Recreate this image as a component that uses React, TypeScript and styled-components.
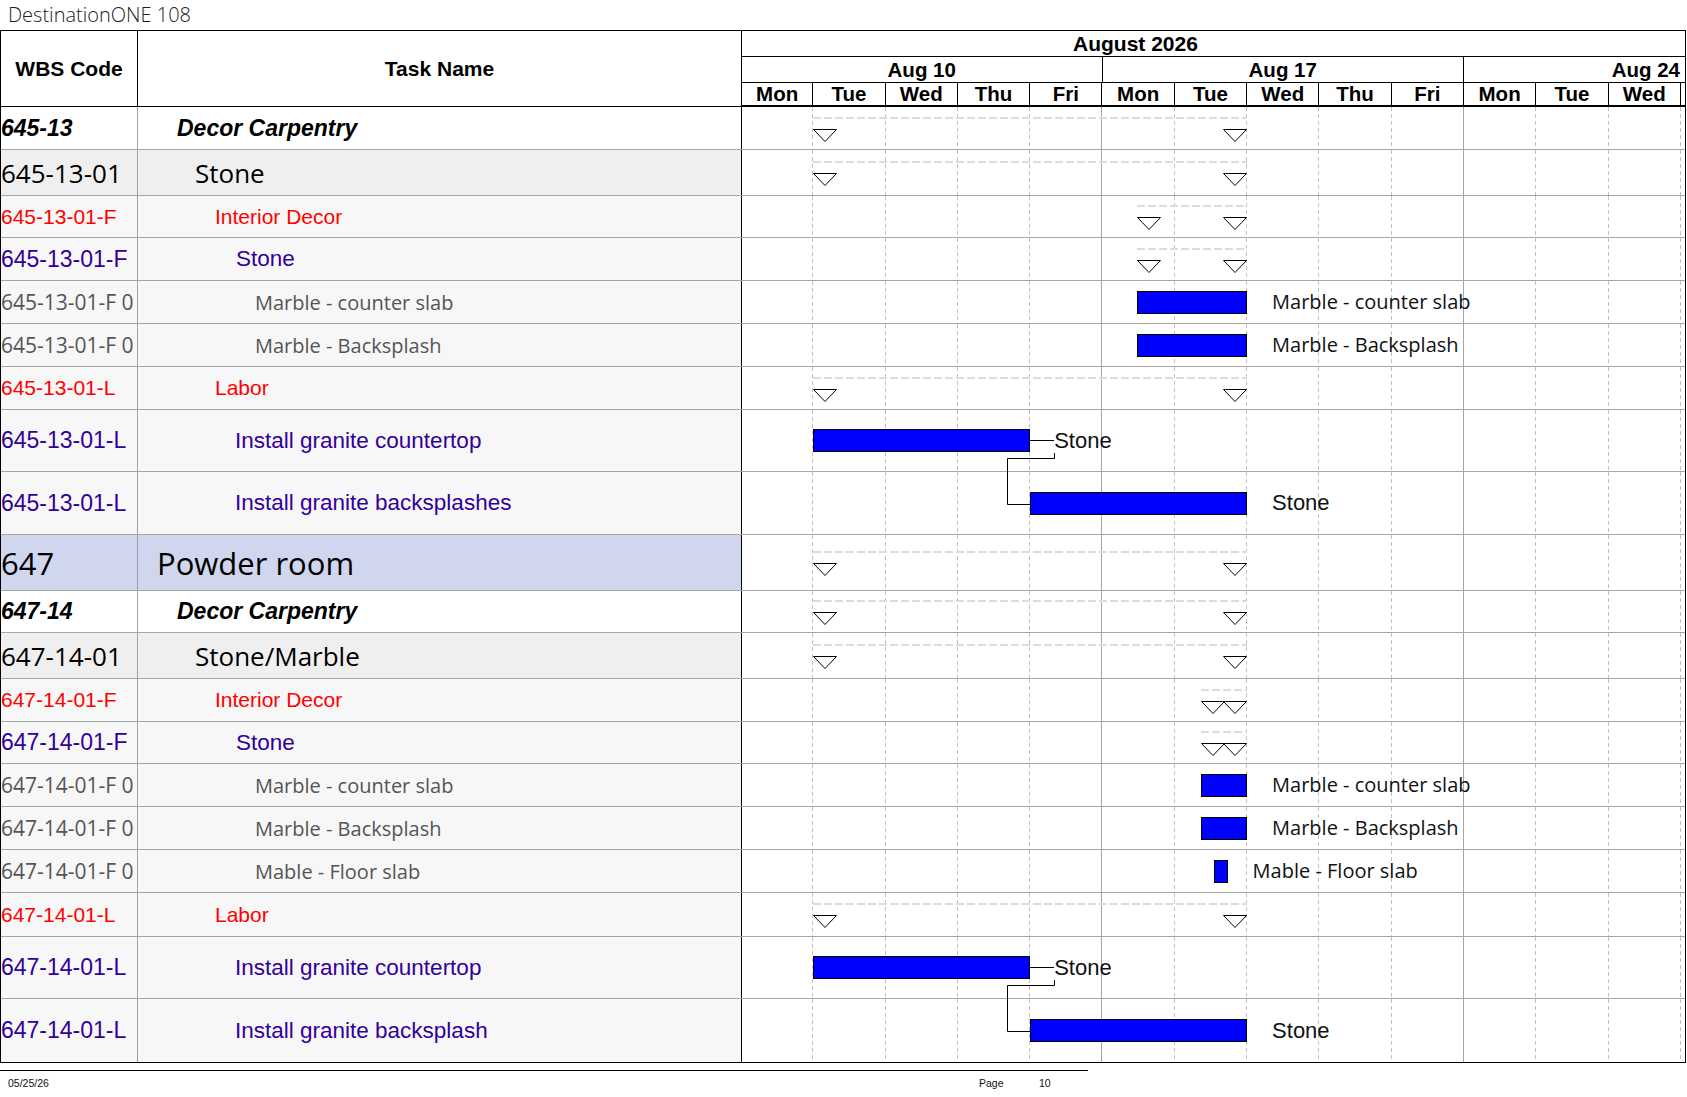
import React from 'react';
import styled, { createGlobalStyle, css } from 'styled-components';

// one working day on the timescale, in px
const DAY = 72.3;
// x of a day offset inside a timeline cell (cell content starts 1px right of the grid origin)
const px = (d: number) => d * DAY - 1;

type Kind = 'area' | 'group' | 'sub' | 'cat' | 'phase' | 'item' | 'task';

type Span = { from: number; to: number };

interface Task {
  code: string;
  name: string;
  kind: Kind;
  h: number;
  summary?: Span;
  bar?: Span & { label: string; link?: boolean };
}

const tasks: Task[] = [
  { code: '645-13', name: 'Decor Carpentry', kind: 'group', h: 43, summary: { from: 1, to: 7 } },
  { code: '645-13-01', name: 'Stone', kind: 'sub', h: 46, summary: { from: 1, to: 7 } },
  { code: '645-13-01-F', name: 'Interior Decor', kind: 'cat', h: 42, summary: { from: 5.48, to: 7 } },
  { code: '645-13-01-F', name: 'Stone', kind: 'phase', h: 43, summary: { from: 5.48, to: 7 } },
  { code: '645-13-01-F 0', name: 'Marble - counter slab', kind: 'item', h: 43, bar: { from: 5.48, to: 7, label: 'Marble - counter slab' } },
  { code: '645-13-01-F 0', name: 'Marble - Backsplash', kind: 'item', h: 43, bar: { from: 5.48, to: 7, label: 'Marble - Backsplash' } },
  { code: '645-13-01-L', name: 'Labor', kind: 'cat', h: 43, summary: { from: 1, to: 7 } },
  { code: '645-13-01-L', name: 'Install granite countertop', kind: 'task', h: 62, bar: { from: 1, to: 4, label: 'Stone', link: true } },
  { code: '645-13-01-L', name: 'Install granite backsplashes', kind: 'task', h: 63, bar: { from: 4, to: 7, label: 'Stone' } },
  { code: '647', name: 'Powder room', kind: 'area', h: 56, summary: { from: 1, to: 7 } },
  { code: '647-14', name: 'Decor Carpentry', kind: 'group', h: 42, summary: { from: 1, to: 7 } },
  { code: '647-14-01', name: 'Stone/Marble', kind: 'sub', h: 46, summary: { from: 1, to: 7 } },
  { code: '647-14-01-F', name: 'Interior Decor', kind: 'cat', h: 43, summary: { from: 6.36, to: 7 } },
  { code: '647-14-01-F', name: 'Stone', kind: 'phase', h: 42, summary: { from: 6.36, to: 7 } },
  { code: '647-14-01-F 0', name: 'Marble - counter slab', kind: 'item', h: 43, bar: { from: 6.36, to: 7, label: 'Marble - counter slab' } },
  { code: '647-14-01-F 0', name: 'Marble - Backsplash', kind: 'item', h: 43, bar: { from: 6.36, to: 7, label: 'Marble - Backsplash' } },
  { code: '647-14-01-F 0', name: 'Mable - Floor slab', kind: 'item', h: 43, bar: { from: 6.54, to: 6.73, label: 'Mable - Floor slab' } },
  { code: '647-14-01-L', name: 'Labor', kind: 'cat', h: 44, summary: { from: 1, to: 7 } },
  { code: '647-14-01-L', name: 'Install granite countertop', kind: 'task', h: 62, bar: { from: 1, to: 4, label: 'Stone', link: true } },
  { code: '647-14-01-L', name: 'Install granite backsplash', kind: 'task', h: 63, bar: { from: 4, to: 7, label: 'Stone' } },
];

const days = ['Mon', 'Tue', 'Wed', 'Thu', 'Fri', 'Mon', 'Tue', 'Wed', 'Thu', 'Fri', 'Mon', 'Tue', 'Wed'];

const RED = '#ff0000';
const INDIGO = '#330099';
const GREY = '#555555';

const arial = '"Liberation Sans", Arial, sans-serif';
const open = '"Open Sans", "Noto Sans", sans-serif';

const looks: Record<Kind, { bg: string; indent: number; code: ReturnType<typeof css>; name: ReturnType<typeof css> }> = {
  area: {
    bg: '#cfd6ee',
    indent: 19,
    code: css`font: 31px ${open}; color: #000;`,
    name: css`font: 31px ${open}; color: #000;`,
  },
  group: {
    bg: '#ffffff',
    indent: 39,
    code: css`font: italic bold 23px ${arial}; color: #000;`,
    name: css`font: italic bold 23px ${arial}; color: #000;`,
  },
  sub: {
    bg: '#efefef',
    indent: 57,
    code: css`font: 26px ${open}; color: #000;`,
    name: css`font: 26px ${open}; color: #000;`,
  },
  cat: {
    bg: '#f7f7f7',
    indent: 77,
    code: css`font: 21px ${arial}; color: ${RED};`,
    name: css`font: 21px ${arial}; color: ${RED};`,
  },
  phase: {
    bg: '#f7f7f7',
    indent: 98,
    code: css`font: 23px ${arial}; color: ${INDIGO};`,
    name: css`font: 22.5px ${arial}; color: ${INDIGO};`,
  },
  item: {
    bg: '#f7f7f7',
    indent: 117,
    code: css`font: 21px ${open}; color: ${GREY};`,
    name: css`font: 20px ${open}; color: ${GREY};`,
  },
  task: {
    bg: '#f7f7f7',
    indent: 97,
    code: css`font: 23px ${arial}; color: ${INDIGO};`,
    name: css`font: 22.5px ${arial}; color: ${INDIGO};`,
  },
};

const GlobalStyle = createGlobalStyle`
  html, body {
    margin: 0;
    padding: 0;
    background: #fff;
  }
  body {
    font-family: ${arial};
    color: #000;
  }
  * {
    box-sizing: border-box;
  }
`;

const Page = styled.div`
  width: 1687px;
  height: 1097px;
  overflow: hidden;
`;

const DocTitle = styled.div`
  height: 30px;
  padding-left: 8px;
  font-family: ${open};
  font-weight: 300;
  font-size: 20px;
  line-height: 29px;
  color: #222;
`;

const Frame = styled.div`
  width: 1686px;
  border: 1px solid #000;
`;

const COLS = '137px 604px 1fr';

const Header = styled.div`
  display: grid;
  grid-template-columns: ${COLS};
  height: 76px;
  border-bottom: 1px solid #000;
`;

const HeadCell = styled.div`
  display: flex;
  align-items: center;
  justify-content: center;
  border-right: 1px solid #000;
  font-weight: bold;
  font-size: 21px;
`;

const Timescale = styled.div`
  display: flex;
  flex-direction: column;
  min-width: 0;
`;

const MonthRow = styled.div`
  height: 26px;
  border-bottom: 1px solid #000;
  padding-left: 331px;
  font-weight: bold;
  font-size: 21px;
  line-height: 25px;
`;

const Tier = styled.div<{ $h: number }>`
  display: flex;
  height: ${p => p.$h}px;
  border-bottom: 1px solid #000;
  overflow: hidden;
`;

const WeekCell = styled.div<{ $w?: number; $right?: boolean }>`
  ${p => (p.$w ? css`width: ${p.$w}px; flex: none; border-right: 1px solid #000;` : css`flex: 1;`)}
  text-align: ${p => (p.$right ? 'right' : 'center')};
  padding-right: ${p => (p.$right ? 5 : 0)}px;
  font-weight: bold;
  font-size: 20.5px;
  line-height: 25px;
  white-space: nowrap;
`;

const DayCell = styled.div<{ $w: number }>`
  width: ${p => p.$w}px;
  flex: none;
  border-right: 1px solid #000;
  text-align: center;
  font-weight: bold;
  font-size: 20.5px;
  line-height: 22px;
`;

const Row = styled.div<{ $h: number; $last: boolean }>`
  display: grid;
  grid-template-columns: ${COLS};
  height: ${p => p.$h}px;
  border-bottom: ${p => (p.$last ? 'none' : '1px solid #a6a6a6')};
`;

const CodeCell = styled.div<{ $kind: Kind }>`
  display: flex;
  align-items: center;
  padding-left: 0;
  overflow: hidden;
  white-space: nowrap;
  border-right: 1px solid #a0a0a0;
  background: ${p => looks[p.$kind].bg};
  ${p => looks[p.$kind].code}
`;

const NameCell = styled.div<{ $kind: Kind }>`
  display: flex;
  align-items: center;
  padding-left: ${p => looks[p.$kind].indent}px;
  overflow: hidden;
  white-space: nowrap;
  border-right: 1px solid #000;
  background: ${p => looks[p.$kind].bg};
  ${p => looks[p.$kind].name}
`;

const TimeCell = styled.div`
  position: relative;
  min-width: 0;
`;

const GridLayer = styled.div`
  position: absolute;
  top: 0;
  bottom: 0;
  left: -1px;
  right: 0;
  display: flex;
  pointer-events: none;
`;

const DayLine = styled.div<{ $week: boolean }>`
  width: ${DAY}px;
  flex: none;
  position: relative;
  &::after {
    content: '';
    position: absolute;
    top: 0;
    bottom: 0;
    right: 0;
    width: 1px;
    background: ${p =>
      p.$week ? '#a6a6a6' : 'repeating-linear-gradient(to bottom, #c2c2c2 0 4px, transparent 4px 7px)'};
  }
`;

const SummaryTrack = styled.div<{ $top: number }>`
  position: absolute;
  top: ${p => p.$top}px;
  height: 2px;
  background: repeating-linear-gradient(to right, #dcdcdc 0 8px, transparent 8px 11px);
`;

const Marker = styled.svg<{ $top: number }>`
  position: absolute;
  top: ${p => p.$top}px;
  width: 24px;
  height: 13px;
  overflow: visible;
`;

const Bar = styled.div`
  position: absolute;
  top: calc(50% - 11.5px);
  height: 23px;
  background: #0000ff;
  border: 1px solid #000;
`;

const BarLabel = styled.div<{ $plain: boolean }>`
  position: absolute;
  top: 50%;
  transform: translateY(-50%);
  white-space: nowrap;
  color: #111;
  font: ${p => (p.$plain ? `20px ${open}` : `22px ${arial}`)};
  line-height: 1;
`;

const Leader = styled.div`
  position: absolute;
  top: calc(50% - 0.5px);
  height: 1px;
  background: #000;
`;

const LinkLine = styled.svg`
  position: absolute;
  left: 0;
  top: 0;
  overflow: visible;
  z-index: 3;
  pointer-events: none;
`;

const FooterRule = styled.div`
  width: 1088px;
  margin-top: 7px;
  border-top: 1px solid #000;
`;

const FooterBar = styled.div`
  display: grid;
  grid-template-columns: 971px 60px auto;
  align-items: center;
  height: 24px;
  padding-left: 8px;
  font: 10.5px ${arial};
  color: #111;
`;

function Triangle({ left, top }: { left: number; top: number }) {
  return (
    <Marker $top={top} style={{ left }} viewBox="0 0 24 13">
      <polygon points="0.5,0.5 23.5,0.5 12,12.5" fill="#fff" stroke="#000" strokeWidth="1" />
    </Marker>
  );
}

function Timeline({ task, nextH }: { task: Task; nextH: number }) {
  const { h, summary, bar } = task;
  const mid = h / 2;
  return (
    <TimeCell>
      <GridLayer>
        {days.map((d, i) => (
          <DayLine key={i} $week={i === 4 || i === 9} />
        ))}
      </GridLayer>
      {summary && (
        <>
          <SummaryTrack
            $top={Math.round(mid - 12)}
            style={{ left: px(summary.from), width: (summary.to - summary.from) * DAY }}
          />
          <Triangle left={px(summary.from)} top={Math.round(mid)} />
          <Triangle left={px(summary.to) - 24} top={Math.round(mid)} />
        </>
      )}
      {bar && (
        <>
          <Bar style={{ left: px(bar.from), width: (bar.to - bar.from) * DAY }} />
          {bar.link ? (
            <>
              <Leader style={{ left: px(bar.to), width: 24 }} />
              <BarLabel $plain={false} style={{ left: px(bar.to) + 24 }}>
                {bar.label}
              </BarLabel>
              <LinkLine width={944} height={h + nextH}>
                <path
                  d={`M ${Math.round(px(bar.to) + 24) + 0.5} ${mid + 12} V ${mid + 17.5} H ${
                    Math.round(px(bar.to) - 23) + 0.5
                  } V ${Math.round(h + nextH / 2) + 0.5} H ${px(bar.to)}`}
                  fill="none"
                  stroke="#000"
                  strokeWidth="1"
                />
              </LinkLine>
            </>
          ) : (
            <BarLabel $plain={task.kind === 'item'} style={{ left: px(bar.to) + 25 }}>
              {bar.label}
            </BarLabel>
          )}
        </>
      )}
    </TimeCell>
  );
}

export default function App() {
  return (
    <Page>
      <GlobalStyle />
      <DocTitle>DestinationONE 108</DocTitle>
      <Frame>
        <Header>
          <HeadCell>WBS Code</HeadCell>
          <HeadCell>Task Name</HeadCell>
          <Timescale>
            <MonthRow>August 2026</MonthRow>
            <Tier $h={26}>
              <WeekCell $w={5 * DAY - 1}>Aug 10</WeekCell>
              <WeekCell $w={5 * DAY}>Aug 17</WeekCell>
              <WeekCell $right>Aug 24</WeekCell>
            </Tier>
            <Tier $h={23}>
              {days.map((d, i) => (
                <DayCell key={i} $w={i === 0 ? DAY - 1 : DAY}>
                  {d}
                </DayCell>
              ))}
            </Tier>
          </Timescale>
        </Header>
        {tasks.map((t, i) => (
          <Row key={i} $h={t.h} $last={i === tasks.length - 1}>
            <CodeCell $kind={t.kind}>{t.code}</CodeCell>
            <NameCell $kind={t.kind}>{t.name}</NameCell>
            <Timeline task={t} nextH={tasks[i + 1]?.h ?? 0} />
          </Row>
        ))}
      </Frame>
      <FooterRule />
      <FooterBar>
        <span>05/25/26</span>
        <span>Page</span>
        <span>10</span>
      </FooterBar>
    </Page>
  );
}
